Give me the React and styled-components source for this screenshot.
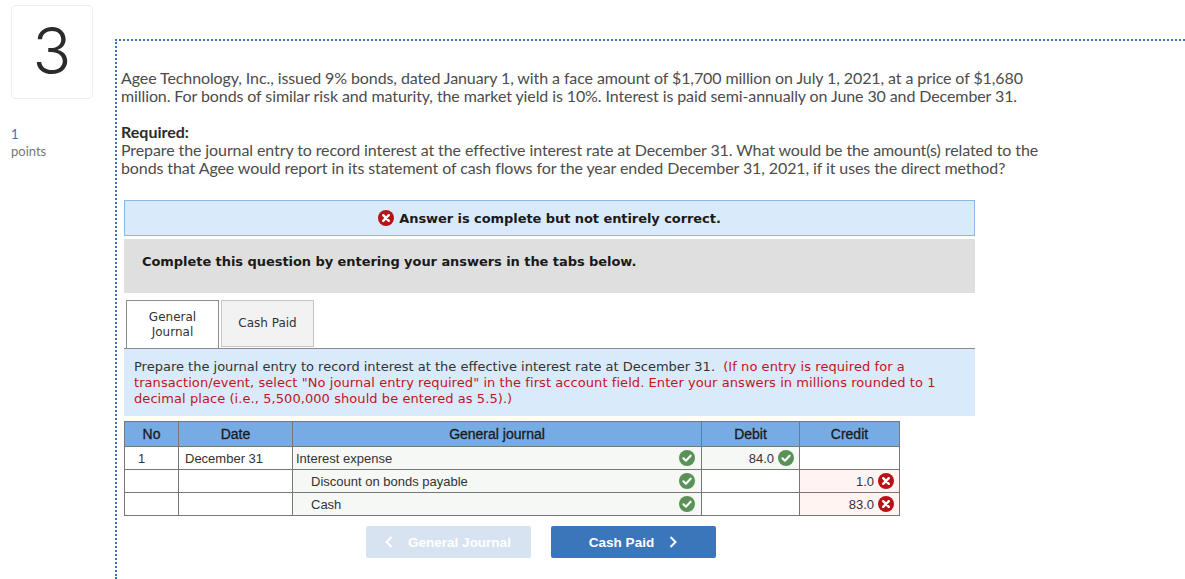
import styled, { createGlobalStyle } from 'styled-components';

const rows = [
  { no: '1', date: 'December 31', account: 'Interest expense', debit: '84.0', credit: '' },
  { no: '', date: '', account: 'Discount on bonds payable', indent: true, debit: '', credit: '1.0' },
  { no: '', date: '', account: 'Cash', indent: true, debit: '', credit: '83.0' },
];

const CrossIcon = ({ size = 16 }) => (
  <svg width={size} height={size} viewBox="0 0 16 16">
    <circle cx="8" cy="8" r="8" fill="#b81116" />
    <path d="M5.2 5.2l5.6 5.6M10.8 5.2l-5.6 5.6" stroke="#fff" strokeWidth="2.4" strokeLinecap="round" />
  </svg>
);

const CheckIcon = () => (
  <svg width="16" height="16" viewBox="0 0 16 16">
    <circle cx="8" cy="8" r="8" fill="#5a9157" />
    <path d="M4.4 8.3l2.5 2.4 4.7-5" fill="none" stroke="#fff" strokeWidth="2.1" strokeLinecap="round" strokeLinejoin="round" />
  </svg>
);

const Chevron = ({ left }) => (
  <svg width="8" height="12" viewBox="0 0 8 12">
    <path d={left ? 'M6.5 1L1.5 6l5 5' : 'M1.5 1l5 5-5 5'} fill="none" stroke="#fff" strokeWidth="2" />
  </svg>
);

export default function App() {
  return (
    <>
      <GlobalStyle />
      <Page>
        <Side>
          <NumberTile>3</NumberTile>
          <PointsValue>1</PointsValue>
          <PointsLabel>points</PointsLabel>
        </Side>
        <Question>
          <Paragraph>
            Agee Technology, Inc., issued 9% bonds, dated January 1, with a face amount of $1,700 million on July 1, 2021, at a price of $1,680
            <br />
            million. For bonds of similar risk and maturity, the market yield is 10%. Interest is paid semi-annually on June 30 and December 31.
          </Paragraph>
          <Required>Required:</Required>
          <Paragraph>
            Prepare the journal entry to record interest at the effective interest rate at December 31. What would be the amount(s) related to the
            <br />
            bonds that Agee would report in its statement of cash flows for the year ended December 31, 2021, if it uses the direct method?
          </Paragraph>
          <Panel>
            <Banner>
              <CrossIcon />
              <span>Answer is complete but not entirely correct.</span>
            </Banner>
            <Instruction>Complete this question by entering your answers in the tabs below.</Instruction>
            <Tabs>
              <Tab $active>General<br />Journal</Tab>
              <Tab>Cash Paid</Tab>
            </Tabs>
            <TabIntro>
              Prepare the journal entry to record interest at the effective interest rate at December 31.{' '}
              <Hint>
                (If no entry is required for a transaction/event, select "No journal entry required" in the first account field. Enter your answers in millions rounded to 1 decimal place (i.e., 5,500,000 should be entered as 5.5).)
              </Hint>
            </TabIntro>
            <Journal>
              <thead>
                <tr>
                  <HeadCell $width={54}>No</HeadCell>
                  <HeadCell $width={114}>Date</HeadCell>
                  <HeadCell $width={409}>General journal</HeadCell>
                  <HeadCell $width={98}>Debit</HeadCell>
                  <HeadCell $width={100}>Credit</HeadCell>
                </tr>
              </thead>
              <tbody>
                {rows.map((row) => (
                  <tr key={row.account}>
                    <NoCell>{row.no}</NoCell>
                    <DateCell>{row.date}</DateCell>
                    <AccountCell>
                      <AccountInner $indent={row.indent}>
                        <span>{row.account}</span>
                        <CheckIcon />
                      </AccountInner>
                    </AccountCell>
                    <AmountCell $state={row.debit ? 'ok' : ''}>
                      {row.debit && <AmountInner>{row.debit}<CheckIcon /></AmountInner>}
                    </AmountCell>
                    <AmountCell $state={row.credit ? 'bad' : ''}>
                      {row.credit && <AmountInner>{row.credit}<CrossIcon /></AmountInner>}
                    </AmountCell>
                  </tr>
                ))}
              </tbody>
            </Journal>
            <Nav>
              <NavButton $disabled>
                <Chevron left />
                General Journal
              </NavButton>
              <NavButton>
                Cash Paid
                <Chevron />
              </NavButton>
            </Nav>
          </Panel>
        </Question>
      </Page>
    </>
  );
}

const GlobalStyle = createGlobalStyle`
  html, body {
    margin: 0;
    padding: 0;
    background: #fff;
    overflow: hidden;
  }
`;

const Page = styled.div`
  display: flex;
  width: 1185px;
  height: 579px;
  overflow: hidden;
  font-family: 'Lato', 'Liberation Sans', sans-serif;
`;

const Side = styled.div`
  box-sizing: border-box;
  width: 115px;
  flex: none;
  padding: 5px 0 0 11px;
`;

const NumberTile = styled.div`
  box-sizing: border-box;
  width: 82px;
  height: 94px;
  border: 1px solid #eeeeee;
  border-radius: 5px;
  font-family: 'Inter', 'Liberation Sans', sans-serif;
  font-size: 64px;
  font-weight: 300;
  line-height: 90px;
  text-align: center;
  color: #2b2b2b;
`;

const PointsValue = styled.div`
  margin-top: 27px;
  font-size: 13px;
  line-height: 16px;
  color: #3b73b9;
`;

const PointsLabel = styled.div`
  margin-top: 1px;
  font-size: 13px;
  line-height: 16px;
  color: #777;
`;

const Question = styled.div`
  box-sizing: border-box;
  flex: 1;
  margin-top: 39px;
  padding: 28px 0 0 4px;
  border-top: 2px dotted #3b73b9;
  border-left: 2px dotted #3b73b9;
`;

const Paragraph = styled.p`
  margin: 0;
  font-size: 16px;
  letter-spacing: -0.1px;
  line-height: 18px;
  color: #4c4c4c;
  white-space: nowrap;
`;

const Required = styled.div`
  margin-top: 18px;
  font-size: 16px;
  font-weight: 700;
  line-height: 18px;
  color: #2b2b2b;
`;

const Panel = styled.div`
  width: 851px;
  margin: 23px 0 0 3px;
  font-family: 'DejaVu Sans', 'Liberation Sans', sans-serif;
`;

const Banner = styled.div`
  box-sizing: border-box;
  display: flex;
  align-items: center;
  justify-content: center;
  gap: 5px;
  height: 36px;
  background: #d9ebfa;
  border: 1px solid #8db7e2;
  font-size: 13px;
  font-weight: 700;
  letter-spacing: -0.07px;
  color: #1a1a1a;
`;

const Instruction = styled.div`
  box-sizing: border-box;
  height: 54px;
  margin-top: 3px;
  padding: 14px 18px 0;
  background: #dfdfdf;
  font-size: 13px;
  font-weight: 700;
  letter-spacing: -0.06px;
  line-height: 17px;
  color: #1a1a1a;
`;

const Tabs = styled.div`
  display: flex;
  gap: 2px;
  height: 48px;
  margin-top: 7px;
  padding-left: 2px;
`;

const Tab = styled.div`
  box-sizing: border-box;
  display: flex;
  align-items: center;
  justify-content: center;
  width: 93px;
  height: ${({ $active }) => ($active ? '48px' : '47px')};
  background: ${({ $active }) => ($active ? '#fff' : '#f2f2f2')};
  border: 1px solid ${({ $active }) => ($active ? '#8c8c8c' : '#c4c4c4')};
  border-bottom: ${({ $active }) => ($active ? 'none' : '')};
  font-size: 12px;
  line-height: 15px;
  text-align: center;
  color: #333;
`;

const TabIntro = styled.div`
  box-sizing: border-box;
  height: 68px;
  padding: 11px 10px 0;
  background: #d9ebfa;
  box-shadow: inset 0 1px 0 #8c8c8c;
  font-size: 13px;
  line-height: 16px;
  color: #333;
`;

const Hint = styled.span`
  margin-left: 4px;
  letter-spacing: 0.07px;
  color: #c1151b;
`;

const Journal = styled.table`
  width: 776px;
  margin-top: 5px;
  border-collapse: collapse;
  table-layout: fixed;
  font-family: 'Liberation Sans', Arial, sans-serif;
  font-size: 13px;
  color: #333;
`;

const HeadCell = styled.th`
  box-sizing: border-box;
  width: ${({ $width }) => $width}px;
  height: 25px;
  padding: 0;
  background: #76abe3;
  border: 1px solid #777;
  font-size: 14px;
  font-weight: 400;
  -webkit-text-stroke: 0.3px #1a1a1a;
  color: #1a1a1a;
`;

const BodyCell = styled.td`
  height: 22px;
  padding: 0;
  border: 1px solid #777;
`;

const NoCell = styled(BodyCell)`
  padding-left: 13px;
`;

const DateCell = styled(BodyCell)`
  padding-left: 6px;
`;

const AccountCell = styled(BodyCell)`
  background: #f6f8f5;
`;

const AccountInner = styled.div`
  display: flex;
  align-items: center;
  justify-content: space-between;
  padding: 0 6px 0 ${({ $indent }) => ($indent ? '18px' : '3px')};
`;

const AmountCell = styled(BodyCell)`
  background: ${({ $state }) => ({ ok: '#f6f8f5', bad: '#fff4f2' }[$state] || '#fff')};
`;

const AmountInner = styled.div`
  display: flex;
  align-items: center;
  justify-content: flex-end;
  gap: 4px;
  padding-right: 5px;
`;

const Nav = styled.div`
  display: flex;
  justify-content: center;
  gap: 20px;
  width: 833px;
  margin-top: 10px;
`;

const NavButton = styled.div`
  display: flex;
  align-items: center;
  justify-content: center;
  gap: 15px;
  width: 165px;
  height: 32px;
  border-radius: 2px;
  background: ${({ $disabled }) => ($disabled ? '#d8e3f1' : '#3b76bb')};
  font-family: 'Liberation Sans', Arial, sans-serif;
  font-size: 13.5px;
  font-weight: 700;
  color: #fff;
`;
